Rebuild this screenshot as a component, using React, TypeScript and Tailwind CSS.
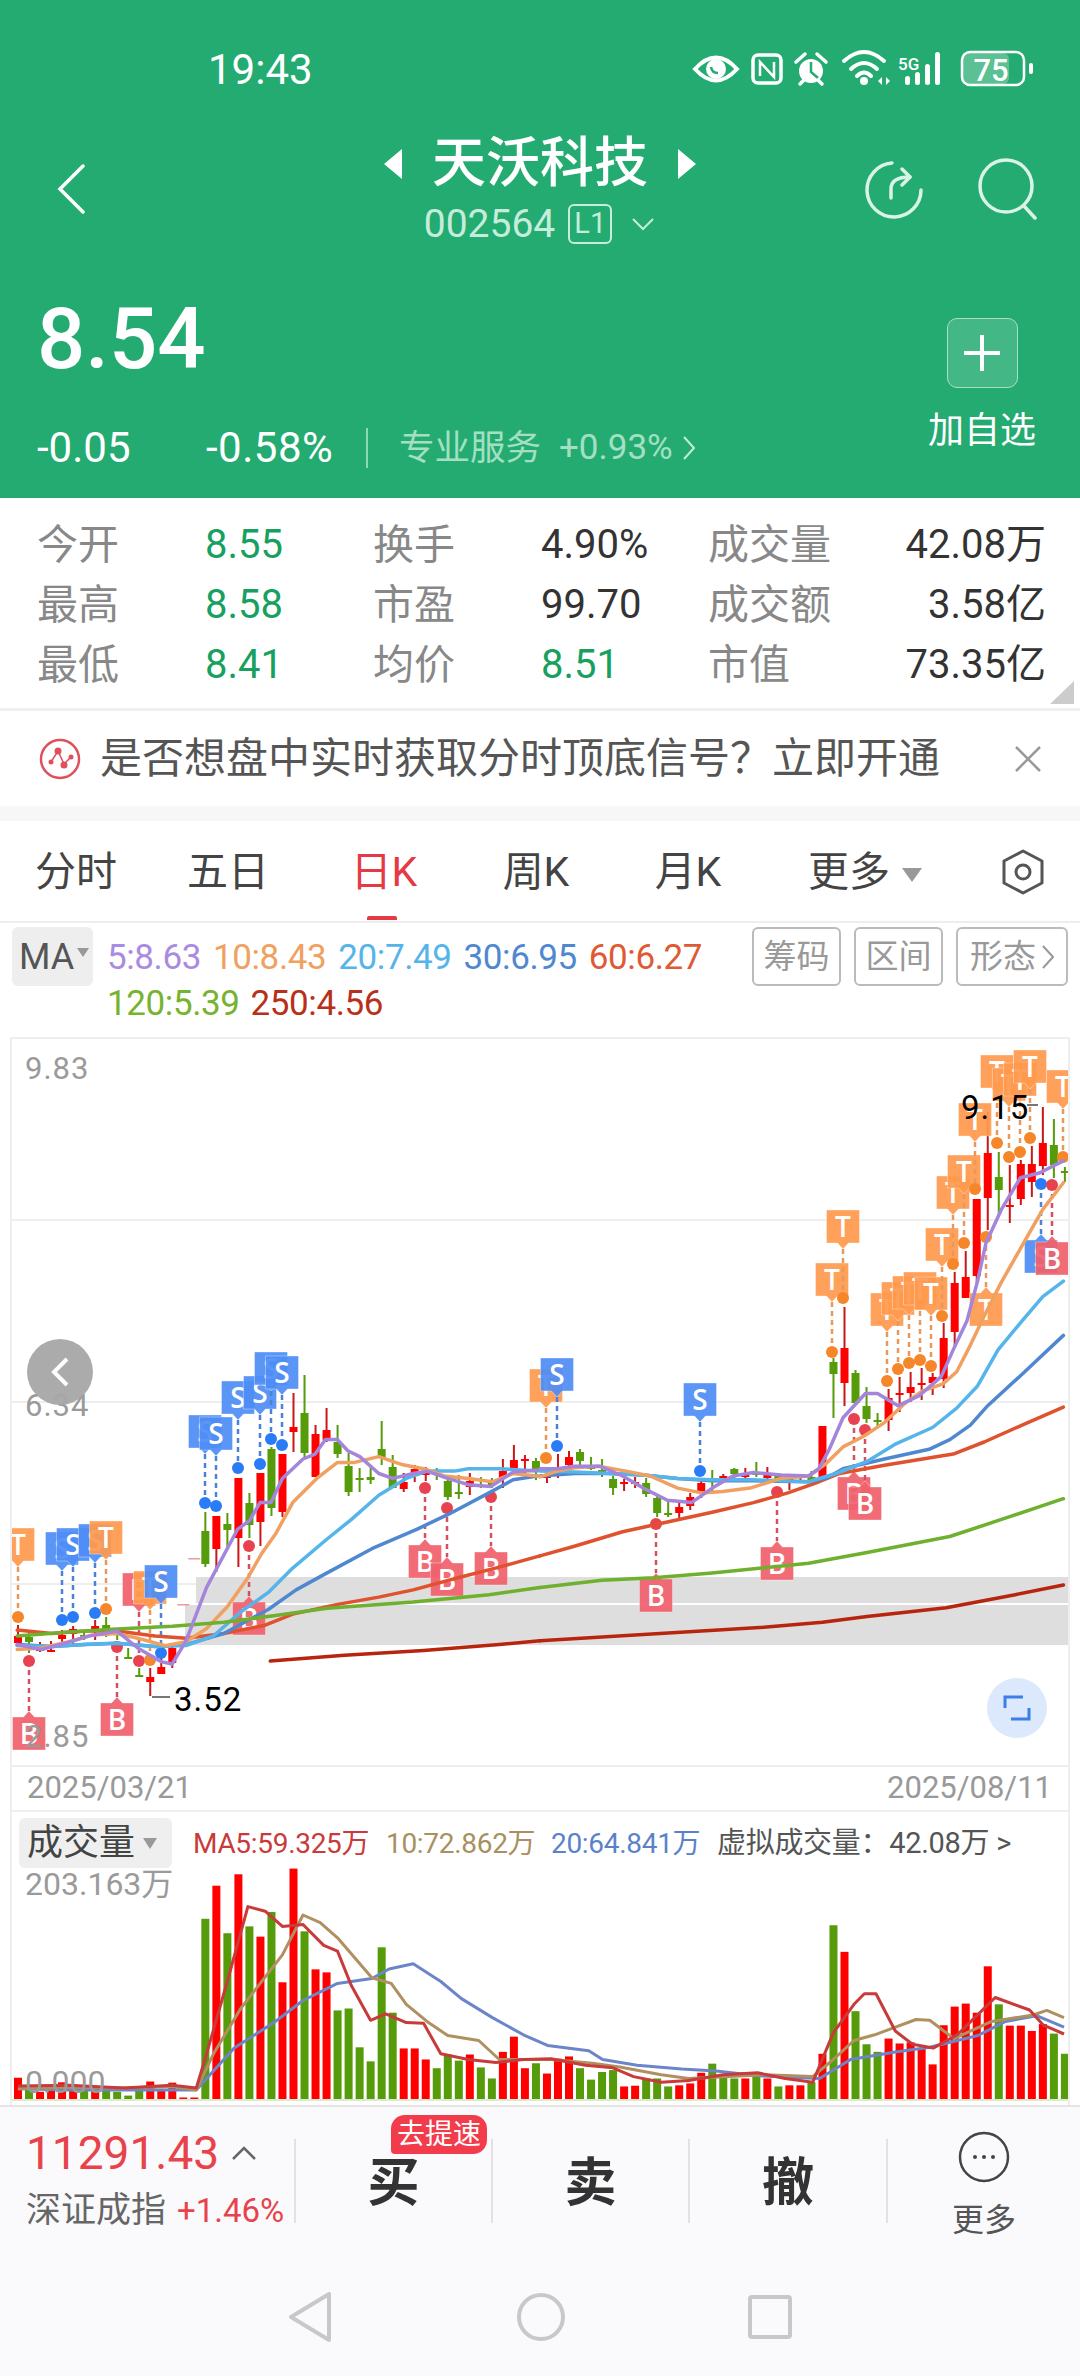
import React from 'react';

type Pt = [number, number];
type Candle = ['r' | 'g', number, number, number, number];
type Sig = ['S' | 'T' | 'B', number, number, number, 'd' | 'u'];

const z3 = (pts: Pt[]) => pts.map(([x, y]) => `${(x / 2.904).toFixed(1)},${(1030 + y / 2.063).toFixed(1)}`).join(' ');
const z4 = (pts: Pt[]) => pts.map(([x, y]) => `${(540 + x / 2.904).toFixed(1)},${(1030 + y / 2.063).toFixed(1)}`).join(' ');
const z5 = (pts: Pt[]) => pts.map(([x, y]) => `${(x / 1.452).toFixed(1)},${(1780 + y / 2.63).toFixed(1)}`).join(' ');

// page coordinates: color, high, body top, body bottom, low
const candles: Candle[] = [
  ['r', 1625, 1636, 1643, 1647], ['g', 1633, 1637, 1642, 1653], ['r', 1642, 1649, 1651, 1652], ['r', 1641, 1650, 1652, 1652],
  ['r', 1630, 1635, 1639, 1647], ['r', 1626, 1629, 1634, 1645], ['g', 1630, 1635, 1637, 1640], ['r', 1620, 1626, 1632, 1640],
  ['g', 1617, 1625, 1629, 1637], ['g', 1632, 1633, 1635, 1640], ['g', 1648, 1657, 1658, 1658], ['g', 1668, 1675, 1676, 1676],
  ['r', 1668, 1677, 1682, 1696], ['r', 1657, 1667, 1674, 1674], ['r', 1647, 1648, 1663, 1668], ['r', 1604, 1604, 1604, 1604],
  ['r', 1558, 1558, 1558, 1558], ['g', 1512, 1531, 1564, 1567], ['r', 1516, 1516, 1549, 1572], ['g', 1513, 1524, 1530, 1550],
  ['r', 1478, 1478, 1538, 1567], ['g', 1493, 1503, 1525, 1538], ['r', 1473, 1473, 1522, 1546], ['g', 1447, 1449, 1508, 1516],
  ['r', 1454, 1454, 1512, 1517], ['r', 1393, 1427, 1432, 1452], ['g', 1375, 1413, 1453, 1457], ['r', 1425, 1434, 1477, 1477],
  ['r', 1408, 1430, 1440, 1442], ['g', 1425, 1442, 1454, 1458], ['g', 1453, 1466, 1492, 1496], ['g', 1468, 1478, 1479, 1492],
  ['g', 1467, 1477, 1480, 1484], ['g', 1421, 1449, 1458, 1465], ['g', 1455, 1467, 1488, 1488], ['r', 1473, 1482, 1489, 1492],
  ['r', 1465, 1469, 1476, 1482], ['r', 1467, 1472, 1475, 1481], ['g', 1468, 1473, 1475, 1480], ['g', 1477, 1481, 1497, 1500],
  ['g', 1475, 1492, 1494, 1499], ['r', 1473, 1481, 1487, 1495], ['g', 1477, 1479, 1480, 1488], ['g', 1478, 1482, 1485, 1488],
  ['r', 1459, 1471, 1478, 1488], ['r', 1445, 1460, 1468, 1475], ['r', 1455, 1459, 1461, 1475], ['g', 1458, 1461, 1472, 1480],
  ['r', 1473, 1476, 1477, 1483], ['r', 1454, 1468, 1473, 1478], ['r', 1451, 1457, 1465, 1472], ['g', 1449, 1452, 1461, 1465],
  ['g', 1457, 1467, 1468, 1470], ['g', 1459, 1470, 1471, 1477], ['g', 1476, 1479, 1488, 1495], ['r', 1479, 1482, 1483, 1491],
  ['r', 1477, 1482, 1483, 1488], ['g', 1478, 1483, 1494, 1497], ['g', 1494, 1498, 1513, 1517], ['g', 1499, 1513, 1514, 1517],
  ['r', 1503, 1507, 1513, 1518], ['r', 1493, 1497, 1506, 1510], ['r', 1478, 1483, 1492, 1498], ['g', 1470, 1478, 1479, 1492],
  ['r', 1474, 1476, 1477, 1480], ['g', 1468, 1469, 1474, 1478], ['r', 1468, 1473, 1477, 1478], ['g', 1462, 1473, 1474, 1477],
  ['r', 1467, 1475, 1478, 1480], ['g', 1473, 1476, 1479, 1480], ['r', 1475, 1477, 1480, 1490], ['r', 1477, 1480, 1481, 1482],
  ['g', 1471, 1477, 1482, 1482], ['r', 1426, 1426, 1480, 1480], ['g', 1358, 1362, 1374, 1418], ['r', 1307, 1348, 1383, 1406],
  ['g', 1370, 1373, 1403, 1405], ['g', 1387, 1406, 1419, 1423], ['g', 1413, 1420, 1421, 1427], ['r', 1389, 1398, 1420, 1431],
  ['r', 1377, 1393, 1395, 1412], ['r', 1372, 1387, 1393, 1402], ['r', 1368, 1383, 1385, 1400], ['r', 1373, 1377, 1383, 1395],
  ['r', 1323, 1338, 1379, 1388], ['r', 1272, 1283, 1332, 1347], ['r', 1251, 1277, 1298, 1298], ['r', 1199, 1199, 1276, 1283],
  ['r', 1112, 1153, 1198, 1230], ['g', 1152, 1177, 1190, 1217], ['r', 1165, 1205, 1206, 1223], ['r', 1160, 1164, 1199, 1205],
  ['r', 1146, 1164, 1182, 1197], ['r', 1107, 1143, 1166, 1175], ['g', 1119, 1145, 1165, 1178], ['g', 1167, 1171, 1172, 1182],
];

// letter, x, dot y, flag top, flag above (d) or below (u) the dot
const signals: Sig[] = [
  ['T', 18, 1617, 1528, 'd'], ['S', 62, 1620, 1532, 'd'], ['S', 73, 1617, 1528, 'd'], ['S', 95, 1613, 1524, 'd'], ['T', 106, 1609, 1521, 'd'],
  ['B', 29, 1661, 1717, 'u'], ['B', 117, 1647, 1703, 'u'], ['B', 139, 1661, 1573, 'd'], ['T', 150, 1660, 1571, 'd'], ['S', 161, 1653, 1565, 'd'],
  ['B', 249, 1546, 1602, 'u'], ['S', 205, 1503, 1415, 'd'], ['S', 216, 1506, 1417, 'd'], ['S', 238, 1468, 1381, 'd'], ['S', 260, 1464, 1376, 'd'],
  ['S', 271, 1439, 1352, 'd'], ['S', 282, 1445, 1356, 'd'], ['B', 425, 1488, 1545, 'u'], ['B', 447, 1508, 1563, 'u'], ['B', 491, 1497, 1552, 'u'],
  ['T', 546, 1458, 1369, 'd'], ['S', 557, 1446, 1358, 'd'], ['B', 656, 1524, 1579, 'u'], ['S', 700, 1471, 1383, 'd'], ['B', 777, 1492, 1547, 'u'],
  ['B', 854, 1419, 1477, 'u'], ['B', 865, 1430, 1487, 'u'], ['T', 832, 1352, 1263, 'd'], ['T', 843, 1298, 1210, 'd'], ['T', 887, 1381, 1293, 'd'],
  ['T', 898, 1369, 1282, 'd'], ['T', 909, 1363, 1276, 'd'], ['T', 920, 1360, 1272, 'd'], ['T', 931, 1366, 1277, 'd'], ['T', 942, 1316, 1228, 'd'],
  ['T', 953, 1264, 1176, 'd'], ['T', 964, 1243, 1155, 'd'], ['T', 975, 1189, 1103, 'd'], ['T', 986, 1237, 1293, 'u'], ['T', 997, 1143, 1055, 'd'],
  ['T', 1009, 1157, 1068, 'd'], ['T', 1020, 1152, 1063, 'd'], ['T', 1030, 1138, 1050, 'd'], ['S', 1041, 1184, 1240, 'u'], ['B', 1052, 1185, 1242, 'u'],
  ['T', 1063, 1157, 1070, 'd'],
];

const flagColor = { S: '#4f8df5', T: '#ff9a4d', B: '#f0616c' };
const stemColor = { S: '#4a82d8', T: '#e8985a', B: '#d4505e' };
const dotColor = { S: '#2a7bf6', T: '#f5862a', B: '#e8414f' };

const ma5: Pt[] = [[50, 1268], [120, 1278], [190, 1265], [260, 1250], [340, 1240], [400, 1275], [467, 1303], [500, 1308], [540, 1260], [600, 1150], [690, 1030], [725, 1012], [755, 975], [787, 975], [820, 925], [880, 885], [915, 875], [945, 845], [980, 845], [1010, 868], [1045, 880], [1100, 915], [1140, 925], [1200, 915], [1240, 910], [1300, 925], [1360, 938], [1425, 942], [1490, 912], [1560, 908]];
const ma5b: Pt[] = [[0, 905], [50, 905], [100, 900], [175, 900], [240, 920], [300, 945], [370, 970], [440, 975], [500, 945], [560, 920], [620, 913], [700, 918], [780, 920], [810, 905], [840, 865], [880, 800], [945, 750], [980, 750], [1040, 775], [1100, 755], [1165, 715], [1200, 660], [1240, 600], [1270, 520], [1295, 440], [1340, 370], [1395, 305], [1450, 295], [1520, 270]];
const ma10: Pt[] = [[50, 1278], [120, 1275], [200, 1262], [270, 1248], [340, 1245], [400, 1255], [480, 1270], [540, 1262], [600, 1235], [660, 1190], [720, 1130], [760, 1080], [800, 1040], [850, 975], [920, 925], [980, 892], [1030, 892], [1100, 880], [1170, 897], [1230, 905], [1290, 920], [1360, 925], [1430, 932], [1490, 915], [1560, 920]];
const ma10b: Pt[] = [[0, 922], [50, 910], [100, 903], [170, 900], [250, 910], [320, 920], [400, 945], [470, 955], [530, 952], [610, 945], [700, 925], [780, 920], [830, 895], [880, 860], [940, 838], [1000, 810], [1060, 770], [1110, 745], [1170, 730], [1210, 705], [1250, 650], [1290, 590], [1340, 520], [1400, 445], [1460, 370], [1520, 315]];
const ma20: Pt[] = [[50, 1270], [150, 1272], [250, 1267], [340, 1265], [450, 1272], [540, 1270], [620, 1250], [700, 1200], [780, 1160], [850, 1110], [950, 1050], [1020, 1010], [1100, 960], [1180, 925], [1240, 910], [1320, 910], [1360, 905], [1450, 905], [1560, 910]];
const ma20b: Pt[] = [[0, 910], [100, 912], [200, 915], [300, 918], [400, 925], [500, 928], [620, 928], [780, 932], [860, 915], [950, 890], [1030, 855], [1140, 820], [1210, 780], [1270, 735], [1330, 660], [1400, 600], [1460, 550], [1520, 518]];
const ma30: Pt[] = [[50, 1268], [150, 1272], [250, 1268], [340, 1265], [450, 1272], [540, 1268], [650, 1245], [780, 1195], [860, 1155], [950, 1120], [1080, 1070], [1210, 1030], [1300, 1000], [1420, 955], [1490, 928], [1560, 920]];
const ma30b: Pt[] = [[0, 920], [100, 915], [200, 915], [300, 918], [400, 925], [500, 930], [620, 930], [780, 932], [830, 925], [880, 905], [1000, 885], [1130, 865], [1190, 845], [1250, 815], [1300, 775], [1400, 710], [1520, 630]];
const ma60: Pt[] = [[50, 1238], [150, 1245], [250, 1240], [340, 1240], [450, 1250], [540, 1255], [650, 1245], [770, 1228], [850, 1205], [980, 1185], [1100, 1170], [1200, 1155], [1330, 1130], [1450, 1108], [1568, 1085]];
const ma60b: Pt[] = [[0, 1085], [100, 1065], [240, 1035], [350, 1018], [500, 995], [620, 975], [720, 955], [800, 935], [870, 915], [1000, 898], [1200, 875], [1290, 850], [1400, 815], [1520, 778]];
const ma120: Pt[] = [[50, 1250], [200, 1242], [340, 1236], [500, 1230], [650, 1222], [800, 1208], [950, 1193], [1200, 1180], [1420, 1165], [1568, 1150]];
const ma120b: Pt[] = [[0, 1150], [180, 1135], [330, 1130], [500, 1120], [780, 1100], [950, 1078], [1190, 1045], [1360, 1005], [1520, 967]];
const ma250: Pt[] = [[785, 1302], [1000, 1290], [1230, 1280], [1450, 1268], [1568, 1260]];
const ma250b: Pt[] = [[0, 1260], [300, 1247], [650, 1232], [820, 1222], [950, 1210], [1180, 1192], [1380, 1165], [1520, 1145]];

const maLines: [string, Pt[], Pt[]][] = [
  ['#b8250e', ma250, ma250b], ['#e0522e', ma60, ma60b], ['#4f88d0', ma30, ma30b], ['#55b5ea', ma20, ma20b], ['#f0a060', ma10, ma10b], ['#6fb02f', ma120, ma120b], ['#a485dc', ma5, ma5b],
];

// zoomed y of each volume bar's top, r/g by sign
const volumes: [string, number][] = ([
  'r783', 'g805', 'r820', 'r810', 'r795', 'r815', 'g815', 'r805', 'g815', 'g820', 'g830', 'g815', 'r793', 'r815', 'r796', 'r835', 'r835', 'g365', 'r278', 'g403', 'r248', 'g385', 'r412', 'g347',
  'r532', 'r233', 'g398', 'r498', 'r506', 'g606', 'g601', 'g703', 'g740', 'g440', 'g612', 'r706', 'r706', 'r735', 'g758', 'g722', 'g738', 'r722', 'g756', 'g785', 'r715', 'r675', 'r758', 'g745',
  'r772', 'r733', 'r727', 'g758', 'g788', 'g768', 'g763', 'r806', 'r804', 'g785', 'g785', 'g806', 'r803', 'r798', 'r770', 'g746', 'g782', 'g785', 'r785', 'g780', 'r785', 'g806', 'r803', 'r803',
  'g795', 'r720', 'g382', 'r452', 'g608', 'g695', 'g715', 'r680', 'r693', 'r690', 'r705', 'r748', 'r645', 'r596', 'r588', 'r612', 'r490', 'g590', 'r646', 'r646', 'r660', 'r642', 'g667', 'g720',
]).map((v) => [v[0], Number(v.slice(1))]);

const volMa5: Pt[] = [[26, 805], [100, 803], [180, 810], [250, 803], [285, 810], [300, 720], [330, 530], [360, 333], [385, 345], [410, 385], [440, 380], [470, 435], [490, 450], [510, 540], [538, 632], [560, 615], [590, 638], [615, 640], [640, 720], [680, 735], [720, 743], [760, 735], [800, 733], [850, 750], [890, 757], [920, 780], [960, 795], [1000, 790], [1050, 775], [1100, 770], [1140, 785], [1180, 795], [1210, 665], [1240, 590], [1255, 562], [1272, 562], [1300, 660], [1325, 695], [1355, 705], [1390, 670], [1445, 572], [1495, 605], [1515, 645], [1545, 668]];
const volMa10: Pt[] = [[26, 812], [100, 808], [180, 810], [250, 806], [285, 815], [310, 720], [350, 600], [410, 460], [440, 355], [465, 375], [490, 415], [540, 520], [568, 535], [590, 590], [620, 635], [650, 672], [695, 685], [725, 735], [800, 735], [860, 745], [900, 755], [960, 775], [1000, 785], [1060, 780], [1110, 775], [1180, 780], [1210, 735], [1240, 685], [1270, 670], [1330, 630], [1350, 632], [1385, 680], [1440, 635], [1500, 618], [1520, 606], [1545, 625]];
const volMa20: Pt[] = [[26, 812], [100, 815], [180, 815], [285, 815], [340, 705], [400, 635], [440, 580], [490, 535], [540, 522], [565, 497], [600, 483], [640, 530], [670, 575], [715, 625], [760, 670], [795, 698], [855, 712], [875, 735], [925, 750], [990, 760], [1040, 765], [1100, 778], [1190, 785], [1235, 735], [1300, 715], [1350, 703], [1420, 672], [1460, 635], [1505, 620], [1545, 650]];

const cx = (i: number) => 18 + 11.02 * i;

function KLine() {
  return (
    <svg width="1056" height="726" viewBox="12 1039 1056 726" className="block">
      {[1220, 1402, 1584].map((y) => <line key={y} x1="12" x2="1068" y1={y} y2={y} stroke="#eeeeee" strokeWidth="2" />)}
      <rect x="196" y="1577" width="880" height="26" fill="#dedede" />
      <rect x="185" y="1605" width="890" height="40" fill="#dedede" />
      {candles.map((c, i) => {
        const x = cx(i);
        if (i === 15 || i === 16) return <rect key={i} x={x - 6} y={c[1]} width="12" height="1.5" fill="#ec9a9a" />;
        const fill = c[0] === 'r' ? '#ff0000' : '#559b0a';
        const wick = c[0] === 'r' ? '#c81818' : '#559b0a';
        return (
          <g key={i}>
            <rect x={x - 1} y={c[1]} width="2" height={c[4] - c[1]} fill={wick} />
            <rect x={x - 4} y={c[2]} width="8" height={Math.max(2, c[3] - c[2])} fill={fill} />
          </g>
        );
      })}
      {signals.map(([l, x, dy, top, dir], i) => {
        const bottom = top + 33;
        const stem = dir === 'd' ? [bottom + 6, dy] : [dy, top - 6];
        const flag = dir === 'd'
          ? `M${x - 16.5} ${top}h33v33h-11l-5.5 6l-5.5-6h-11z`
          : `M${x - 16.5} ${top}h11l5.5-6l5.5 6h11v33h-33z`;
        return (
          <g key={i}>
            <line x1={x} x2={x} y1={stem[0]} y2={stem[1]} stroke={stemColor[l]} strokeWidth="2.5" strokeDasharray="5 4" />
            <circle cx={x} cy={dy} r="6" fill={dotColor[l]} />
            <path d={flag} fill={flagColor[l]} fillOpacity="0.93" stroke="#ffffff" strokeOpacity="0.35" />
            <text x={x} y={top + 27} textAnchor="middle" fontSize="28" fontWeight="600" fill="#ffffff" fontFamily="Open Sans">{l}</text>
          </g>
        );
      })}
      {maLines.map(([color, a, b], i) => (
        <g key={i} fill="none" stroke={color} strokeWidth="3.5" strokeLinejoin="round" strokeLinecap="round">
          <polyline points={z3(a)} />
          <polyline points={z4(b)} />
        </g>
      ))}
      <g fontFamily="Roboto" fontSize="31" fill="#9a9a9a" letterSpacing="1">
        <text x="25" y="1079">9.83</text>
        <text x="25" y="1416">6.34</text>
        <text x="25" y="1747">2.85</text>
      </g>
      <g fontFamily="Roboto" fontSize="33" fill="#000000" letterSpacing="1">
        <text x="174" y="1711">3.52</text>
        <text x="961" y="1119">9.15</text>
      </g>
      <line x1="152" x2="170" y1="1697" y2="1697" stroke="#777777" strokeWidth="2" />
      <line x1="1027" x2="1038" y1="1105" y2="1105" stroke="#777777" strokeWidth="2" />
    </svg>
  );
}

function Volume() {
  return (
    <svg width="1056" height="237" viewBox="12 1868 1056 237" className="block">
      {volumes.map(([c, y], i) => {
        const top = 1780 + y / 2.63;
        return <rect key={i} x={cx(i) - 4} y={top} width="8" height={2099 - top} fill={c === 'r' ? '#ff0000' : '#559b0a'} />;
      })}
      <rect x="12" y="2099" width="1056" height="2" fill="#dcebd0" />
      <g fill="none" strokeWidth="3" strokeLinejoin="round">
        <polyline points={z5(volMa20)} stroke="#6b85c8" />
        <polyline points={z5(volMa10)} stroke="#b09060" />
        <polyline points={z5(volMa5)} stroke="#c93a3a" />
      </g>
      <g fontFamily="Roboto" fontSize="32" fill="#9a9a9a">
        <text x="25" y="1895" fontFamily="Roboto, Noto Sans CJK SC">203.163万</text>
        <text x="25" y="2093">0.000</text>
      </g>
    </svg>
  );
}

function StatusIcons() {
  return (
    <svg width="360" height="60" viewBox="0 0 360 60" className="block">
      <g fill="none" stroke="#ffffff">
        <path d="M15 29 Q36 6 57 29 Q36 52 15 29Z" strokeWidth="4" />
        <circle cx="36" cy="29" r="10" fill="#ffffff" stroke="none" />
        <path d="M31 27 q1 6 7 6" stroke="#24ab71" strokeWidth="2.5" />
        <rect x="73" y="15" width="28" height="28" rx="5" strokeWidth="3.5" />
        <path d="M80 36 V22 L94 37 V22" strokeWidth="2.5" />
        <circle cx="131" cy="31" r="12" fill="#ffffff" stroke="none" />
        <path d="M131 22 V32 L138 38" stroke="#24ab71" strokeWidth="2.5" />
        <path d="M116 22 L125 14 M146 22 L137 14 M120 44 L124 40 M142 44 L138 40" strokeWidth="3.5" strokeLinecap="round" />
        <path d="M164 21 Q184 3 204 21 M171 29 Q184 17 197 29 M177 36 Q184 29 191 36" strokeWidth="4" strokeLinecap="round" />
        <circle cx="184" cy="41" r="4" fill="#ffffff" stroke="none" />
        <path d="M202 37 l-4 4 l4 4z M206 37 l4 4 l-4 4z" fill="#ffffff" stroke="none" />
      </g>
      <g fill="#ffffff">
        <text x="218" y="30" fontSize="17" fontFamily="Roboto" fontWeight="500">5G</text>
        <rect x="225" y="36" width="5" height="9" rx="2.5" />
        <rect x="235" y="32" width="5" height="13" rx="2.5" />
        <rect x="245" y="24" width="5" height="21" rx="2.5" />
        <rect x="255" y="12" width="5" height="33" rx="2.5" />
        <rect x="282" y="13" width="47" height="31" rx="6" fillOpacity="0.25" />
        <rect x="282" y="12" width="62" height="33" rx="8" fill="none" stroke="#ffffff" strokeWidth="2.5" />
        <rect x="349" y="23" width="4" height="11" rx="2" />
        <text x="311" y="41" textAnchor="middle" fontSize="31" fontFamily="Roboto" fontWeight="500">75</text>
      </g>
    </svg>
  );
}

const stats = [
  ['今开', '8.55', '换手', '4.90%', '成交量', '42.08万'],
  ['最高', '8.58', '市盈', '99.70', '成交额', '3.58亿'],
  ['最低', '8.41', '均价', '8.51', '市值', '73.35亿'],
];

const maLegend = [
  ['5:8.63', 'text-[#a98ce0]'], ['10:8.43', 'text-[#f0a060]'], ['20:7.49', 'text-[#55b5ea]'], ['30:6.95', 'text-[#4f88d0]'], ['60:6.27', 'text-[#dd5a34]'],
];

export default function App() {
  return (
    <div className="relative flex h-[2376px] w-[1080px] flex-col overflow-hidden bg-white [font-family:Roboto,'Noto_Sans_CJK_SC',sans-serif]">
      {/* header */}
      <div className="h-[498px] shrink-0 bg-[#24ab71] text-white">
        <div className="flex h-[136px] items-start">
          <div className="ml-[208px] mt-[46px] text-[42px] leading-[48px] text-white">19:43</div>
          <div className="ml-[367px] mt-[40px]"><StatusIcons /></div>
        </div>
        <div className="flex h-[112px]">
          <div className="w-[350px] pl-[57px] pt-[28px]">
            <svg width="28" height="50" viewBox="0 0 28 50" fill="none" stroke="#ffffff" strokeWidth="3.5" strokeLinecap="round"><path d="M26 2 L3 25 L26 48" /></svg>
          </div>
          <div className="flex w-[380px] flex-col items-center">
            <div className="flex h-[56px] items-center">
              <svg width="20" height="30" viewBox="0 0 20 30" fill="#ffffff"><path d="M20 0 V30 L2 15Z" /></svg>
              <span className="mx-[30px] text-[54px] font-medium leading-[56px]">天沃科技</span>
              <svg width="20" height="30" viewBox="0 0 20 30" fill="#ffffff"><path d="M0 0 V30 L18 15Z" /></svg>
            </div>
            <div className="mt-[12px] flex h-[40px] items-center pr-[2px] text-[#c6eddb]">
              <span className="text-[39px] leading-[40px]">002564</span>
              <span className="ml-[13px] flex h-[40px] w-[44px] items-center justify-center rounded-[6px] border-2 border-[#c6eddb] text-[29px]">L1</span>
              <svg className="ml-[20px]" width="22" height="14" viewBox="0 0 22 14" fill="none" stroke="#c6eddb" strokeWidth="2"><path d="M1 2 L11 12 L21 2" /></svg>
            </div>
          </div>
          <div className="flex items-start pl-[134px] pt-[24px]">
            <svg width="60" height="60" viewBox="0 0 60 60" fill="none" stroke="#d9f3e6" strokeWidth="3.5" strokeLinecap="round" strokeLinejoin="round">
              <path d="M28 3 A27 27 0 1 0 57 30" />
              <path d="M27 38 V29 Q27 17 46 17" />
              <path d="M38 9 L46 17 L38 25" />
            </svg>
            <svg className="ml-[54px] -mt-[2px]" width="62" height="62" viewBox="0 0 62 62" fill="none" stroke="#d9f3e6" strokeWidth="3.5" strokeLinecap="round">
              <circle cx="28" cy="28" r="26" />
              <path d="M46 48 L57 60" />
            </svg>
          </div>
        </div>
        <div className="flex">
          <div className="w-[932px] pl-[37px]">
            <div className="mt-[46px] text-[85px] font-medium leading-[90px]">8.54</div>
            <div className="mt-[44px] flex h-[40px] items-center text-[42px] leading-[40px]">
              <span className="w-[169px]">-0.05</span>
              <span className="w-[160px] tracking-[0.5px]">-0.58%</span>
              <span className="h-[40px] w-[2px] bg-[#8fd8b6]" />
              <span className="ml-[31px] text-[35.5px] text-[#a3e0c3]">专业服务</span>
              <span className="ml-[18px] text-[35px] text-[#a3e0c3]">+0.93%</span>
              <svg className="ml-[9px]" width="14" height="26" viewBox="0 0 14 26" fill="none" stroke="#c6eddb" strokeWidth="2"><path d="M2 2 L12 13 L2 24" /></svg>
            </div>
          </div>
          <div className="flex w-[100px] flex-col items-center">
            <div className="mt-[70px] flex h-[70px] w-[71px] items-center justify-center rounded-[10px] border border-[#a9dfc5] bg-white/15">
              <svg width="38" height="38" viewBox="0 0 38 38" stroke="#ffffff" strokeWidth="4"><path d="M19 1 V37 M1 19 H37" /></svg>
            </div>
            <div className="mt-[25px] whitespace-nowrap text-[36px] leading-[36px]">加自选</div>
          </div>
        </div>
      </div>

      {/* quote table */}
      <div className="relative h-[213px] shrink-0 border-b-[3px] border-[#f0f0f0] pl-[37px] pr-[34px] pt-[17px]">
        {stats.map((r, i) => (
          <div key={i} className="flex h-[60px] items-center text-[40px] leading-[60px]">
            <span className="w-[168px] text-[41px] text-[#888888]">{r[0]}</span>
            <span className="w-[168px] text-[#17a05f]">{r[1]}</span>
            <span className="w-[168px] text-[41px] text-[#888888]">{r[2]}</span>
            <span className={`w-[167px] ${r[3] === '8.51' ? 'text-[#17a05f]' : 'text-[#333333]'}`}>{r[3]}</span>
            <span className="w-[167px] text-[41px] text-[#888888]">{r[4]}</span>
            <span className="flex-1 whitespace-nowrap text-right text-[#333333]">{r[5]}</span>
          </div>
        ))}
        <svg className="absolute bottom-[4px] right-[6px]" width="24" height="23" viewBox="0 0 24 23" fill="#cccccc"><path d="M24 0 V23 H0Z" /></svg>
      </div>

      {/* promo banner */}
      <div className="flex h-[95px] shrink-0 items-center pl-[39px]">
        <svg width="42" height="42" viewBox="0 0 42 42" fill="none" stroke="#e0505a" strokeWidth="2.5">
          <circle cx="21" cy="21" r="19" />
          <path d="M12 24 L19 13 L25 26 L32 19" strokeWidth="1.5" />
          <circle cx="12" cy="24" r="2.5" fill="#e0505a" stroke="none" />
          <circle cx="19" cy="13" r="3.5" fill="#e0505a" stroke="none" />
          <circle cx="25" cy="27" r="3.5" fill="#e0505a" stroke="none" />
          <circle cx="32" cy="19" r="2.5" fill="#e0505a" stroke="none" />
        </svg>
        <span className="ml-[19px] whitespace-nowrap text-[42px] leading-[48px] text-[#555555]">是否想盘中实时获取分时顶底信号？立即开通</span>
        <svg className="ml-[74px]" width="28" height="28" viewBox="0 0 28 28" stroke="#999999" strokeWidth="2.5"><path d="M2 2 L26 26 M26 2 L2 26" /></svg>
      </div>
      <div className="h-[15px] shrink-0 bg-[#f7f7f7]" />

      {/* period tabs */}
      <div className="relative flex h-[102px] shrink-0 items-center border-b-2 border-[#eeeeee] pt-[2px] text-[41px] leading-[50px] text-[#444444]">
        <span className="w-[152px] text-center">分时</span>
        <span className="w-[152px] text-center">五日</span>
        <span className="w-[160px] text-center text-[#e63946]">日K</span>
        <span className="w-[144px] text-center">周K</span>
        <span className="w-[160px] text-center">月K</span>
        <span className="w-[160px] pl-[40px]">更多</span>
        <svg className="absolute left-[902px] top-[47px]" width="20" height="14" viewBox="0 0 20 14" fill="#999999"><path d="M0 0 H20 L10 14Z" /></svg>
        <svg className="ml-[74px]" width="42" height="46" viewBox="0 0 42 46" fill="none" stroke="#555555" strokeWidth="3" strokeLinejoin="round">
          <path d="M21 2 L40 12 V34 L21 44 L2 34 V12Z" />
          <circle cx="21" cy="23" r="7" />
        </svg>
        <div className="absolute bottom-[1px] left-[367px] h-[4px] w-[30px] rounded-t-[2px] bg-[#e63946]" />
      </div>

      {/* MA legend */}
      <div className="relative flex h-[114px] shrink-0 items-start pl-[12px] pt-[4px]">
        <div className="flex h-[59px] w-[81px] items-center rounded-[6px] bg-[#eeeeee] pl-[7px] text-[36px] leading-[40px] text-[#555555]">
          MA
          <svg className="ml-[3px] -mt-[8px]" width="12" height="9" viewBox="0 0 12 9" fill="#999999"><path d="M0 0 H12 L6 9Z" /></svg>
        </div>
        <div className="ml-[14px] w-[610px] pt-[8px] text-[35px] leading-[46px]">
          <div className="flex gap-[12px] whitespace-nowrap tracking-[-0.4px]">
            {maLegend.map(([t, c]) => <span key={t} className={c}>{t}</span>)}
          </div>
          <div className="flex gap-[11px] whitespace-nowrap tracking-[-0.4px]">
            <span className="text-[#76b32e]">120:5.39</span>
            <span className="text-[#b8301a]">250:4.56</span>
          </div>
        </div>
        <div className="ml-[35px] flex gap-[13px] text-[33px] text-[#999999]">
          <span className="flex h-[59px] w-[89px] items-center justify-center rounded-[6px] border-2 border-[#bbbbbb]">筹码</span>
          <span className="flex h-[59px] w-[89px] items-center justify-center rounded-[6px] border-2 border-[#bbbbbb]">区间</span>
          <span className="flex h-[59px] w-[112px] items-center justify-center gap-[6px] rounded-[6px] border-2 border-[#bbbbbb]">
            形态
            <svg width="12" height="26" viewBox="0 0 12 26" fill="none" stroke="#999999" strokeWidth="2"><path d="M1 2 L11 13 L1 24" /></svg>
          </span>
        </div>
      </div>

      {/* k line */}
      <div className="relative mx-[10px] h-[775px] shrink-0 border-x-2 border-t-2 border-[#eeeeee]">
        <KLine />
        <div className="flex h-[47px] items-center justify-between border-y-2 border-[#eeeeee] pl-[15px] pr-[16px] text-[31px] text-[#999999]">
          <span>2025/03/21</span>
          <span>2025/08/11</span>
        </div>
        <div className="absolute left-[15px] top-[300px] flex h-[66px] w-[66px] items-center justify-center rounded-full bg-[#a6a6a6]/95">
          <svg width="20" height="32" viewBox="0 0 20 32" fill="none" stroke="#ffffff" strokeWidth="4"><path d="M17 3 L4 16 L17 29" /></svg>
        </div>
        <div className="absolute left-[975px] top-[639px] flex h-[60px] w-[60px] items-center justify-center rounded-full bg-[#dce8fc]">
          <svg width="28" height="28" viewBox="0 0 28 28" fill="none" stroke="#3b7ee8" strokeWidth="3"><path d="M2 14 V3 H20 M26 14 V25 H8" /></svg>
        </div>
      </div>

      {/* volume */}
      <div className="mx-[10px] h-[293px] shrink-0 border-x-2 border-[#eeeeee]">
        <div className="flex h-[56px] items-start whitespace-nowrap pl-[7px] pt-[6px]">
          <div className="flex h-[50px] w-[153px] items-center rounded-[6px] bg-[#efefef] pl-[8px] text-[36px] text-[#444444]">
            成交量
            <svg className="ml-[8px]" width="14" height="11" viewBox="0 0 14 11" fill="#999999"><path d="M0 0 H14 L7 11Z" /></svg>
          </div>
          <div className="ml-[21px] flex h-[52px] items-center text-[28px] tracking-[-0.3px]">
            <span className="w-[193px] text-[#c93a3a]">MA5:59.325万</span>
            <span className="w-[165px] text-[#a89060]">10:72.862万</span>
            <span className="w-[166px] text-[#5b82c8]">20:64.841万</span>
            <span className="text-[29px] text-[#555555]">虚拟成交量：42.08万 &gt;</span>
          </div>
        </div>
        <Volume />
      </div>

      {/* trade bar */}
      <div className="flex flex-1 flex-col border-t-2 border-[#e5e5e5] bg-[#fafafd]">
        <div className="relative mt-[32px] flex h-[84px] shrink-0">
          <div className="w-[294px] pl-[26px]">
            <div className="-mt-[9px] flex h-[46px] items-center text-[46px] leading-[46px] text-[#e8434a]">
              11291.43
              <svg className="ml-[13px]" width="24" height="14" viewBox="0 0 24 14" fill="none" stroke="#666666" strokeWidth="2.5"><path d="M1 13 L12 2 L23 13" /></svg>
            </div>
            <div className="mt-[13px] flex h-[44px] items-center whitespace-nowrap">
              <span className="text-[35px] text-[#666666]">深证成指</span>
              <span className="ml-[11px] text-[33px] text-[#e8434a]">+1.46%</span>
            </div>
          </div>
          <div className="flex w-[197px] items-center justify-center border-l-2 border-[#e2e2e2] pt-[5px] text-[52px] font-bold text-[#333333]">买</div>
          <div className="flex w-[197px] items-center justify-center border-l-2 border-[#e2e2e2] pt-[5px] text-[52px] font-bold text-[#333333]">卖</div>
          <div className="flex w-[198px] items-center justify-center border-l-2 border-[#e2e2e2] pt-[5px] text-[52px] font-bold text-[#333333]">撤</div>
          <div className="flex w-[194px] flex-col items-center border-l-2 border-[#e2e2e2]">
            <svg className="-mt-[8px] shrink-0" width="52" height="52" viewBox="0 0 52 52" fill="none" stroke="#444444" strokeWidth="2.5">
              <circle cx="26" cy="26" r="24" />
              <circle cx="17" cy="26" r="2" fill="#444444" stroke="none" />
              <circle cx="26" cy="26" r="2" fill="#444444" stroke="none" />
              <circle cx="35" cy="26" r="2" fill="#444444" stroke="none" />
            </svg>
            <span className="mt-[17px] shrink-0 text-[32px] leading-[40px] text-[#555555]">更多</span>
          </div>
          <div className="absolute left-[391px] -top-[24px] flex h-[39px] w-[96px] items-center justify-center rounded-[14px] rounded-bl-[4px] bg-[#f23b4b] text-[28px] leading-[32px] text-white">去提速</div>
        </div>
        <div className="flex flex-1 items-center justify-center pt-[34px]">
          <svg width="46" height="52" viewBox="0 0 46 52" fill="none" stroke="#c8c8c8" strokeWidth="4" strokeLinejoin="round"><path d="M42 3 V49 L4 26Z" /></svg>
          <svg className="ml-[183px]" width="50" height="50" viewBox="0 0 50 50" fill="none" stroke="#c8c8c8" strokeWidth="4"><circle cx="25" cy="25" r="22" /></svg>
          <svg className="ml-[181px]" width="46" height="46" viewBox="0 0 46 46" fill="none" stroke="#c8c8c8" strokeWidth="4"><rect x="3" y="3" width="40" height="40" rx="2" /></svg>
        </div>
      </div>
    </div>
  );
}
